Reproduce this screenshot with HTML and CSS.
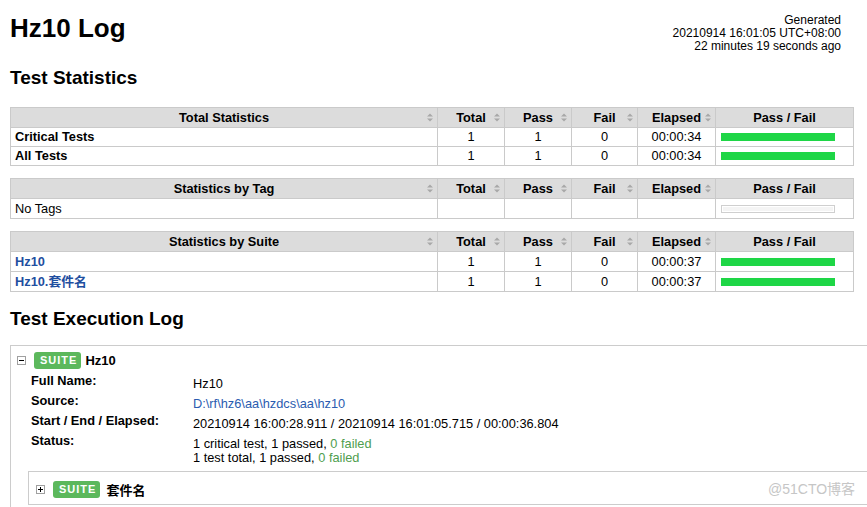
FILE: index.html
```html
<!DOCTYPE html>
<html lang="en">
<head>
<meta charset="utf-8">
<title>Hz10 Log</title>
<link rel="stylesheet" href="styles.css">
</head>
<body>
<div class="page">
  <div class="top">
    <div class="header">
      <h1>Hz10 Log</h1>
      <div class="generated">Generated<br>20210914 16:01:05 UTC+08:00<br>22 minutes 19 seconds ago</div>
    </div>
    <h2 class="h-stats">Test Statistics</h2>

    <table class="stats">
      <colgroup><col><col class="c-total"><col class="c-pass"><col class="c-fail"><col class="c-elapsed"><col class="c-graph"></colgroup>
      <thead><tr>
        <th><div class="th-in"><span class="th-text">Total Statistics</span><svg class="sort" width="6" height="9" viewBox="0 0 6 9"><path d="M0 3.6L3 0.4L6 3.6Z M0 5.4L3 8.6L6 5.4Z" fill="#a8a8a8"/></svg></div></th>
        <th><div class="th-in"><span class="th-text">Total</span><svg class="sort" width="6" height="9" viewBox="0 0 6 9"><path d="M0 3.6L3 0.4L6 3.6Z M0 5.4L3 8.6L6 5.4Z" fill="#a8a8a8"/></svg></div></th>
        <th><div class="th-in"><span class="th-text">Pass</span><svg class="sort" width="6" height="9" viewBox="0 0 6 9"><path d="M0 3.6L3 0.4L6 3.6Z M0 5.4L3 8.6L6 5.4Z" fill="#a8a8a8"/></svg></div></th>
        <th><div class="th-in"><span class="th-text">Fail</span><svg class="sort" width="6" height="9" viewBox="0 0 6 9"><path d="M0 3.6L3 0.4L6 3.6Z M0 5.4L3 8.6L6 5.4Z" fill="#a8a8a8"/></svg></div></th>
        <th><div class="th-in"><span class="th-text">Elapsed</span><svg class="sort" width="6" height="9" viewBox="0 0 6 9"><path d="M0 3.6L3 0.4L6 3.6Z M0 5.4L3 8.6L6 5.4Z" fill="#a8a8a8"/></svg></div></th>
        <th>Pass / Fail</th>
      </tr></thead>
      <tbody>
        <tr><td class="name strong">Critical Tests</td><td class="num">1</td><td class="num">1</td><td class="num">0</td><td class="num">00:00:34</td><td class="graph"><div class="bar pass-bar"></div></td></tr>
        <tr><td class="name strong">All Tests</td><td class="num">1</td><td class="num">1</td><td class="num">0</td><td class="num">00:00:34</td><td class="graph"><div class="bar pass-bar"></div></td></tr>
      </tbody>
    </table>

    <table class="stats tall">
      <colgroup><col><col class="c-total"><col class="c-pass"><col class="c-fail"><col class="c-elapsed"><col class="c-graph"></colgroup>
      <thead><tr>
        <th><div class="th-in"><span class="th-text">Statistics by Tag</span><svg class="sort" width="6" height="9" viewBox="0 0 6 9"><path d="M0 3.6L3 0.4L6 3.6Z M0 5.4L3 8.6L6 5.4Z" fill="#a8a8a8"/></svg></div></th>
        <th><div class="th-in"><span class="th-text">Total</span><svg class="sort" width="6" height="9" viewBox="0 0 6 9"><path d="M0 3.6L3 0.4L6 3.6Z M0 5.4L3 8.6L6 5.4Z" fill="#a8a8a8"/></svg></div></th>
        <th><div class="th-in"><span class="th-text">Pass</span><svg class="sort" width="6" height="9" viewBox="0 0 6 9"><path d="M0 3.6L3 0.4L6 3.6Z M0 5.4L3 8.6L6 5.4Z" fill="#a8a8a8"/></svg></div></th>
        <th><div class="th-in"><span class="th-text">Fail</span><svg class="sort" width="6" height="9" viewBox="0 0 6 9"><path d="M0 3.6L3 0.4L6 3.6Z M0 5.4L3 8.6L6 5.4Z" fill="#a8a8a8"/></svg></div></th>
        <th><div class="th-in"><span class="th-text">Elapsed</span><svg class="sort" width="6" height="9" viewBox="0 0 6 9"><path d="M0 3.6L3 0.4L6 3.6Z M0 5.4L3 8.6L6 5.4Z" fill="#a8a8a8"/></svg></div></th>
        <th>Pass / Fail</th>
      </tr></thead>
      <tbody>
        <tr><td class="name">No Tags</td><td class="num"></td><td class="num"></td><td class="num"></td><td class="num"></td><td class="graph"><div class="bar empty-bar"></div></td></tr>
      </tbody>
    </table>

    <table class="stats tall">
      <colgroup><col><col class="c-total"><col class="c-pass"><col class="c-fail"><col class="c-elapsed"><col class="c-graph"></colgroup>
      <thead><tr>
        <th><div class="th-in"><span class="th-text">Statistics by Suite</span><svg class="sort" width="6" height="9" viewBox="0 0 6 9"><path d="M0 3.6L3 0.4L6 3.6Z M0 5.4L3 8.6L6 5.4Z" fill="#a8a8a8"/></svg></div></th>
        <th><div class="th-in"><span class="th-text">Total</span><svg class="sort" width="6" height="9" viewBox="0 0 6 9"><path d="M0 3.6L3 0.4L6 3.6Z M0 5.4L3 8.6L6 5.4Z" fill="#a8a8a8"/></svg></div></th>
        <th><div class="th-in"><span class="th-text">Pass</span><svg class="sort" width="6" height="9" viewBox="0 0 6 9"><path d="M0 3.6L3 0.4L6 3.6Z M0 5.4L3 8.6L6 5.4Z" fill="#a8a8a8"/></svg></div></th>
        <th><div class="th-in"><span class="th-text">Fail</span><svg class="sort" width="6" height="9" viewBox="0 0 6 9"><path d="M0 3.6L3 0.4L6 3.6Z M0 5.4L3 8.6L6 5.4Z" fill="#a8a8a8"/></svg></div></th>
        <th><div class="th-in"><span class="th-text">Elapsed</span><svg class="sort" width="6" height="9" viewBox="0 0 6 9"><path d="M0 3.6L3 0.4L6 3.6Z M0 5.4L3 8.6L6 5.4Z" fill="#a8a8a8"/></svg></div></th>
        <th>Pass / Fail</th>
      </tr></thead>
      <tbody>
        <tr><td class="name"><a class="stat-link">Hz10</a></td><td class="num">1</td><td class="num">1</td><td class="num">0</td><td class="num">00:00:37</td><td class="graph"><div class="bar pass-bar"></div></td></tr>
        <tr><td class="name"><a class="stat-link">Hz10.套件名</a></td><td class="num">1</td><td class="num">1</td><td class="num">0</td><td class="num">00:00:37</td><td class="graph"><div class="bar pass-bar"></div></td></tr>
      </tbody>
    </table>

    <h2 class="h-log">Test Execution Log</h2>
  </div>

  <div class="suite">
    <div class="suite-header">
      <svg class="toggle" width="9" height="9" viewBox="0 0 9 9"><rect x="0.5" y="0.5" width="8" height="8" fill="#fff" stroke="#a0a0a0"/><path d="M2 4.5H7" stroke="#000" stroke-width="1"/></svg>
      <span class="label">SUITE</span>
      <span class="suite-name">Hz10</span>
    </div>
    <div class="meta">
      <div class="meta-label">Full Name:</div>
      <div class="meta-value">Hz10</div>
      <div class="meta-label">Source:</div>
      <div class="meta-value"><a class="source-link">D:\rf\hz6\aa\hzdcs\aa\hz10</a></div>
      <div class="meta-label">Start / End / Elapsed:</div>
      <div class="meta-value">20210914 16:00:28.911 / 20210914 16:01:05.715 / 00:00:36.804</div>
      <div class="meta-label">Status:</div>
      <div class="meta-value">1 critical test, 1 passed, <span class="ok">0 failed</span><br>1 test total, 1 passed, <span class="ok">0 failed</span></div>
    </div>
    <div class="child">
      <div class="suite-header">
        <svg class="toggle" width="9" height="9" viewBox="0 0 9 9"><rect x="0.5" y="0.5" width="8" height="8" fill="#fff" stroke="#a0a0a0"/><path d="M2 4.5H7 M4.5 2V7" stroke="#000" stroke-width="1"/></svg>
        <span class="label">SUITE</span>
        <span class="suite-name">套件名</span>
      </div>
    </div>
  </div>
</div>
<div class="watermark">@51CTO博客</div>
</body>
</html>
```

FILE: styles.css
```css
html, body {
  overflow: hidden;
}
body {
  margin: 0;
  background: #fff;
  color: #000;
  font-family: "Liberation Sans", Arial, "Noto Sans CJK SC", sans-serif;
  font-size: 12.8px;
}
.page {
  padding-left: 10px;
}
.top {
  margin-right: 13px;
}
.header {
  display: flex;
  justify-content: space-between;
  align-items: flex-start;
  height: 53px;
}
h1 {
  margin: 13px 0 0 0;
  font-size: 26px;
  line-height: 30px;
  font-weight: bold;
}
.generated {
  margin: 14px 13px 0 0;
  font-size: 12px;
  line-height: 13px;
  text-align: right;
}
h2 {
  font-size: 19px;
  line-height: 22px;
  font-weight: bold;
  margin: 0;
}
.h-stats {
  margin: 14px 0 18px;
}
.h-log {
  margin: 16px 0 15px;
}
.stats {
  width: 844px;
  table-layout: fixed;
  border-collapse: collapse;
  margin-bottom: 12px;
}
.stats:last-of-type {
  margin-bottom: 0;
}
.c-total, .c-pass { width: 67px; }
.c-fail { width: 66px; }
.c-elapsed { width: 78px; }
.c-graph { width: 138px; }
.stats th {
  background: #dcdcdc;
  border: 1px solid #cacaca;
  padding: 1px 4px;
  line-height: 17px;
  font-weight: bold;
  text-align: center;
}
.th-in {
  display: grid;
  grid-template-columns: 1fr auto 1fr;
  align-items: center;
}
.th-text {
  grid-column: 2;
}
.sort {
  grid-column: 3;
  justify-self: end;
  display: block;
}
.stats td {
  border: 1px solid #cacaca;
  padding: 1px 4px;
  line-height: 16px;
  white-space: nowrap;
}
.stats.tall td {
  line-height: 17px;
}
.stats td.num {
  text-align: center;
}
.stats td.strong {
  font-weight: bold;
}
.stats td.graph {
  padding: 0 4px 0 5px;
  vertical-align: middle;
}
.stat-link {
  color: #1f4fa0;
  font-weight: bold;
  text-decoration: none;
}
.bar {
  width: 114px;
  height: 8px;
}
.pass-bar {
  background: #1ed646;
}
.empty-bar {
  box-sizing: border-box;
  border: 1px solid #cfcfcf;
  background: #f4f4f4;
  box-shadow: inset 0 0 0 1px #fff;
}
.suite {
  border: 1px solid #cccccc;
  border-right: none;
  padding: 6px 0 8px 0;
}
.suite-header {
  display: flex;
  align-items: center;
  height: 17px;
  padding-left: 6px;
}
.toggle {
  display: block;
  margin-right: 8px;
}
.label {
  display: inline-block;
  background: #5cb85c;
  color: #fff;
  font-weight: bold;
  font-size: 11px;
  letter-spacing: 1px;
  line-height: 17px;
  height: 17px;
  padding: 0 4px 0 6px;
  border-radius: 3px;
  margin-right: 4px;
}
.suite-name {
  font-weight: bold;
  font-size: 13px;
}
.meta {
  display: grid;
  grid-template-columns: 162px 1fr;
  margin: 5px 0 0 20px;
  line-height: 14px;
}
.meta-label {
  font-weight: bold;
  padding-bottom: 6px;
}
.meta-value {
  padding: 3px 0 3px;
}
.source-link {
  color: #2a5cb0;
  text-decoration: none;
}
.ok {
  color: #4f9e4f;
}
.child {
  margin: 3px 0 0 17px;
  border: 1px solid #cccccc;
  border-right: none;
  padding: 9px 0 6px 0;
}
.child .suite-header {
  padding-left: 7px;
}
.child .label {
  margin-right: 6px;
}
.watermark {
  position: absolute;
  left: 768px;
  top: 481px;
  font-size: 14px;
  line-height: 17px;
  color: #c6c6c6;
}
```
